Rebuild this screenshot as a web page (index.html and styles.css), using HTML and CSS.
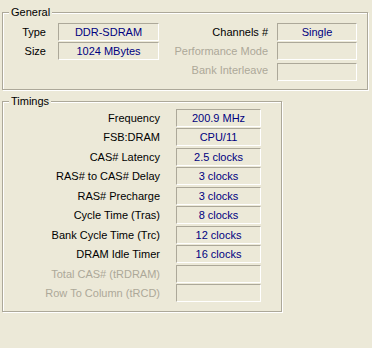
FILE: index.html
```
<!DOCTYPE html>
<html lang="en">
<head>
    <meta charset="UTF-8">
    <title>Memory</title>
    <link rel="stylesheet" href="styles.css">
</head>
<body>

<div class="panel">
    <div class="group general">
        <span class="legend">General</span>
        <div class="general-grid">
            <span class="label">Type</span>
            <span class="field">DDR-SDRAM</span>
            <span class="label">Channels #</span>
            <span class="field">Single</span>

            <span class="label">Size</span>
            <span class="field">1024 MBytes</span>
            <span class="label disabled">Performance Mode</span>
            <span class="field"></span>

            <span class="label disabled right-col">Bank Interleave</span>
            <span class="field right-box"></span>
        </div>
    </div>

    <div class="group timings">
        <span class="legend">Timings</span>
        <div class="row"><span class="label">Frequency</span><span class="field">200.9 MHz</span></div>
        <div class="row"><span class="label">FSB:DRAM</span><span class="field">CPU/11</span></div>
        <div class="row"><span class="label">CAS# Latency</span><span class="field">2.5 clocks</span></div>
        <div class="row"><span class="label">RAS# to CAS# Delay</span><span class="field">3 clocks</span></div>
        <div class="row"><span class="label">RAS# Precharge</span><span class="field">3 clocks</span></div>
        <div class="row"><span class="label">Cycle Time (Tras)</span><span class="field">8 clocks</span></div>
        <div class="row"><span class="label">Bank Cycle Time (Trc)</span><span class="field">12 clocks</span></div>
        <div class="row"><span class="label">DRAM Idle Timer</span><span class="field">16 clocks</span></div>
        <div class="row"><span class="label disabled">Total CAS# (tRDRAM)</span><span class="field"></span></div>
        <div class="row"><span class="label disabled">Row To Column (tRCD)</span><span class="field"></span></div>
    </div>
</div>

</body>
</html>
```

FILE: styles.css
```
body {
    margin: 0;
    background-color: #ece9d8;
    font-family: "Liberation Sans", Arial, sans-serif;
    font-size: 11px;
    color: #000;
}

.panel {
    width: 372px;
    height: 348px;
    overflow: hidden;
}

/* etched group box: gray line with a white line beside it */
.group {
    position: relative;
    box-sizing: border-box;
    margin-left: 2px;
    border: 1px solid #aca899;
    box-shadow: 1px 1px 0 #fff, inset 1px 1px 0 #fff;
}

.legend {
    position: absolute;
    top: -7px;
    left: 6px;
    padding: 0 2px;
    line-height: 13px;
    background-color: #ece9d8;
}

.general {
    margin-top: 12px;
    width: 366px;
    height: 78px;
    padding-top: 10px;
}

.general-grid {
    display: grid;
    grid-template-columns: 55px 101px 118px 80px;
    grid-template-rows: 18px 18px 20px;
    row-gap: 1px;
}

.general-grid .label {
    padding-right: 12px;
}

.general-grid .label:nth-child(4n+3) {
    padding-right: 9px;
}

.general-grid .right-col {
    grid-column: 3;
    padding-right: 9px;
}

.general-grid .right-box {
    grid-column: 4;
    align-self: end;
}

.timings {
    margin-top: 11px;
    width: 280px;
    height: 211px;
    padding-top: 7px;
}

.row {
    display: flex;
    height: 18px;
    margin-top: 1px;
}

.row:first-of-type {
    margin-top: 0;
}

.row:nth-of-type(odd) {
    margin-top: 2px;
}

.row:nth-of-type(1) {
    margin-top: 0;
}

.timings .label {
    width: 173px;
    padding-right: 16px;
}

.timings .field {
    width: 85px;
}

.label {
    box-sizing: border-box;
    text-align: right;
    line-height: 18px;
    white-space: nowrap;
}

.label.disabled {
    color: #aca899;
}

.field {
    box-sizing: border-box;
    height: 18px;
    border: 1px solid;
    border-color: #aca899 #fff #fff #aca899;
    line-height: 16px;
    text-align: center;
    color: #000080;
    white-space: nowrap;
}
```
